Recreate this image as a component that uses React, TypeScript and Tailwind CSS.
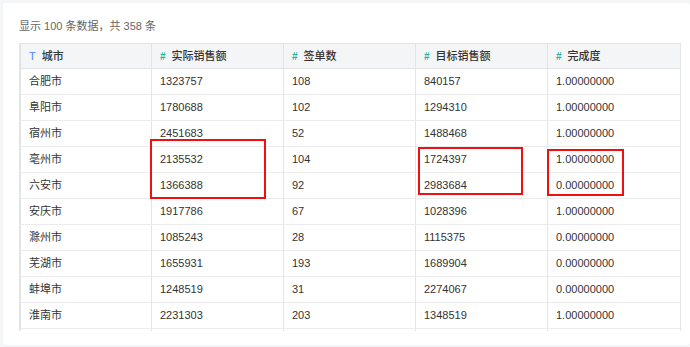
import React from "react";

const rows: [string, string, string, string, string][] = [
  ["合肥市", "1323757", "108", "840157", "1.00000000"],
  ["阜阳市", "1780688", "102", "1294310", "1.00000000"],
  ["宿州市", "2451683", "52", "1488468", "1.00000000"],
  ["亳州市", "2135532", "104", "1724397", "1.00000000"],
  ["六安市", "1366388", "92", "2983684", "0.00000000"],
  ["安庆市", "1917786", "67", "1028396", "1.00000000"],
  ["滁州市", "1085243", "28", "1115375", "0.00000000"],
  ["芜湖市", "1655931", "193", "1689904", "0.00000000"],
  ["蚌埠市", "1248519", "31", "2274067", "0.00000000"],
  ["淮南市", "2231303", "203", "1348519", "1.00000000"],
];

const headers: { icon: "T" | "#"; label: string }[] = [
  { icon: "T", label: "城市" },
  { icon: "#", label: "实际销售额" },
  { icon: "#", label: "签单数" },
  { icon: "#", label: "目标销售额" },
  { icon: "#", label: "完成度" },
];

export default function App() {
  return (
    <div
      className="w-[690px] h-[347px] bg-[#f4f5f7] pt-[3px] pl-[3px] overflow-hidden"
      style={{ fontFamily: '"Liberation Sans", "Noto Sans CJK SC", sans-serif' }}
    >
      <div className="relative bg-white h-[342px] rounded-[3px] pl-4 pt-[15px]">
        <div className="text-[11px] leading-4 text-[#666] mb-[9px]">显示 100 条数据，共 358 条</div>
        <div className="w-[662px] h-[288px] overflow-hidden border-l-2 border-r border-t border-[#e3e4e6]">
          <div className="grid grid-cols-[131px_132px_132px_132px_1fr] h-[25px] bg-[#f4f5f7] border-b border-[#e3e4e6]">
            {headers.map((h, i) => (
              <div
                key={i}
                className={`flex items-center pl-2 text-[11px] text-[#333] font-medium ${i < 4 ? "border-r border-[#e3e4e6]" : ""}`}
              >
                <span
                  className={`mr-[6px] ${h.icon === "T" ? "text-[#4f86f7] text-[11px]" : "text-[#1fb5a0] text-[10px] font-bold"}`}
                >
                  {h.icon}
                </span>
                <span>{h.label}</span>
              </div>
            ))}
          </div>
          {rows.map((r, ri) => (
            <div
              key={ri}
              className="grid grid-cols-[131px_132px_132px_132px_1fr] h-[26px] border-b border-[#ececee]"
            >
              {r.map((c, ci) => (
                <div
                  key={ci}
                  className={`flex items-center pl-2 text-[11px] text-[#333] ${ci < 4 ? "border-r border-[#e3e4e6]" : ""}`}
                >
                  {c}
                </div>
              ))}
            </div>
          ))}
          <div className="grid grid-cols-[131px_132px_132px_132px_1fr] h-[26px]">
            {[0, 1, 2, 3, 4].map((ci) => (
              <div key={ci} className={ci < 4 ? "border-r border-[#e3e4e6]" : ""} />
            ))}
          </div>
        </div>
        <div className="absolute left-[147px] top-[136px] w-[116px] h-[60px] border-2 border-[#f01010]" />
        <div className="absolute left-[415px] top-[144px] w-[105px] h-[48px] border-2 border-[#f01010]" />
        <div className="absolute left-[544px] top-[146px] w-[77px] h-[47px] border-2 border-[#f01010]" />
      </div>
    </div>
  );
}
